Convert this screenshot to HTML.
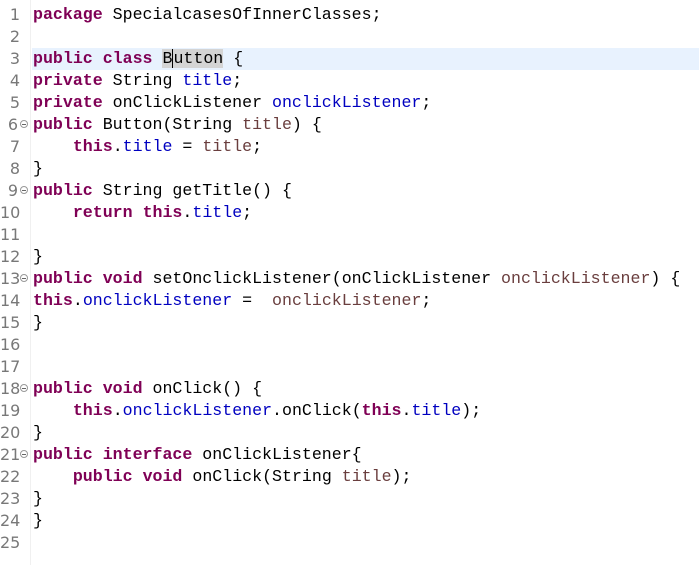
<!DOCTYPE html><html><head><style>
body{margin:0;width:699px;height:565px;background:#fff;overflow:hidden;position:relative;font-family:"DejaVu Sans Mono","Liberation Mono",monospace}
.l{position:absolute;left:0;height:22px;width:699px;line-height:22px;font-size:16.5px;white-space:pre}
.n{position:absolute;left:0;width:20px;text-align:right;color:#787878;font-family:"DejaVu Sans","Liberation Sans",sans-serif;font-size:16px}
.c{position:absolute;left:33px;color:#000;font-family:"Liberation Mono",monospace;font-size:16.6px}
.f{position:absolute;left:20px;top:6px;width:8px;height:8px;border:1px solid #999;border-radius:50%;box-sizing:border-box}
.f:after{content:"";position:absolute;left:1px;top:3px;width:4px;height:1px;background:#666}
k{color:#7f0055;font-weight:bold}v{color:#0000c0}q{color:#6a3e3e}q:before,q:after{content:none}
.hl{background:#e8f2fe}
</style></head><body>
<div style="position:absolute;left:30px;top:0;width:1px;height:565px;background:#f0f0f0"></div>
<div class="l" style="top:4px"><span class="n">1</span><span class="c"><k>package</k> SpecialcasesOfInnerClasses;</span></div>
<div class="l" style="top:26px"><span class="n">2</span></div>
<div class="l" style="top:48px"><div class="hl" style="position:absolute;left:32px;right:0;top:0;bottom:0"></div><span class="n">3</span><span class="c"><k>public</k> <k>class</k> <span style="background:#d4d4d4">B<span style="border-left:1px solid #000">u</span>tton</span> {</span></div>
<div class="l" style="top:70px"><span class="n">4</span><span class="c"><k>private</k> String <v>title</v>;</span></div>
<div class="l" style="top:92px"><span class="n">5</span><span class="c"><k>private</k> onClickListener <v>onclickListener</v>;</span></div>
<div class="l" style="top:114px"><span class="n" style="width:18px">6</span><span class="f"></span><span class="c"><k>public</k> Button(String <q>title</q>) {</span></div>
<div class="l" style="top:136px"><span class="n">7</span><span class="c">    <k>this</k>.<v>title</v> = <q>title</q>;</span></div>
<div class="l" style="top:158px"><span class="n">8</span><span class="c">}</span></div>
<div class="l" style="top:180px"><span class="n" style="width:18px">9</span><span class="f"></span><span class="c"><k>public</k> String getTitle() {</span></div>
<div class="l" style="top:202px"><span class="n">10</span><span class="c">    <k>return</k> <k>this</k>.<v>title</v>;</span></div>
<div class="l" style="top:224px"><span class="n">11</span></div>
<div class="l" style="top:246px"><span class="n">12</span><span class="c">}</span></div>
<div class="l" style="top:268px"><span class="n" style="width:18px">13</span><span class="f"></span><span class="c"><k>public</k> <k>void</k> setOnclickListener(onClickListener <q>onclickListener</q>) {</span></div>
<div class="l" style="top:290px"><span class="n">14</span><span class="c"><k>this</k>.<v>onclickListener</v> =  <q>onclickListener</q>;</span></div>
<div class="l" style="top:312px"><span class="n">15</span><span class="c">}</span></div>
<div class="l" style="top:334px"><span class="n">16</span></div>
<div class="l" style="top:356px"><span class="n">17</span></div>
<div class="l" style="top:378px"><span class="n" style="width:18px">18</span><span class="f"></span><span class="c"><k>public</k> <k>void</k> onClick() {</span></div>
<div class="l" style="top:400px"><span class="n">19</span><span class="c">    <k>this</k>.<v>onclickListener</v>.onClick(<k>this</k>.<v>title</v>);</span></div>
<div class="l" style="top:422px"><span class="n">20</span><span class="c">}</span></div>
<div class="l" style="top:444px"><span class="n" style="width:18px">21</span><span class="f"></span><span class="c"><k>public</k> <k>interface</k> onClickListener{</span></div>
<div class="l" style="top:466px"><span class="n">22</span><span class="c">    <k>public</k> <k>void</k> onClick(String <q>title</q>);</span></div>
<div class="l" style="top:488px"><span class="n">23</span><span class="c">}</span></div>
<div class="l" style="top:510px"><span class="n">24</span><span class="c">}</span></div>
<div class="l" style="top:532px"><span class="n">25</span></div>
</body></html>
